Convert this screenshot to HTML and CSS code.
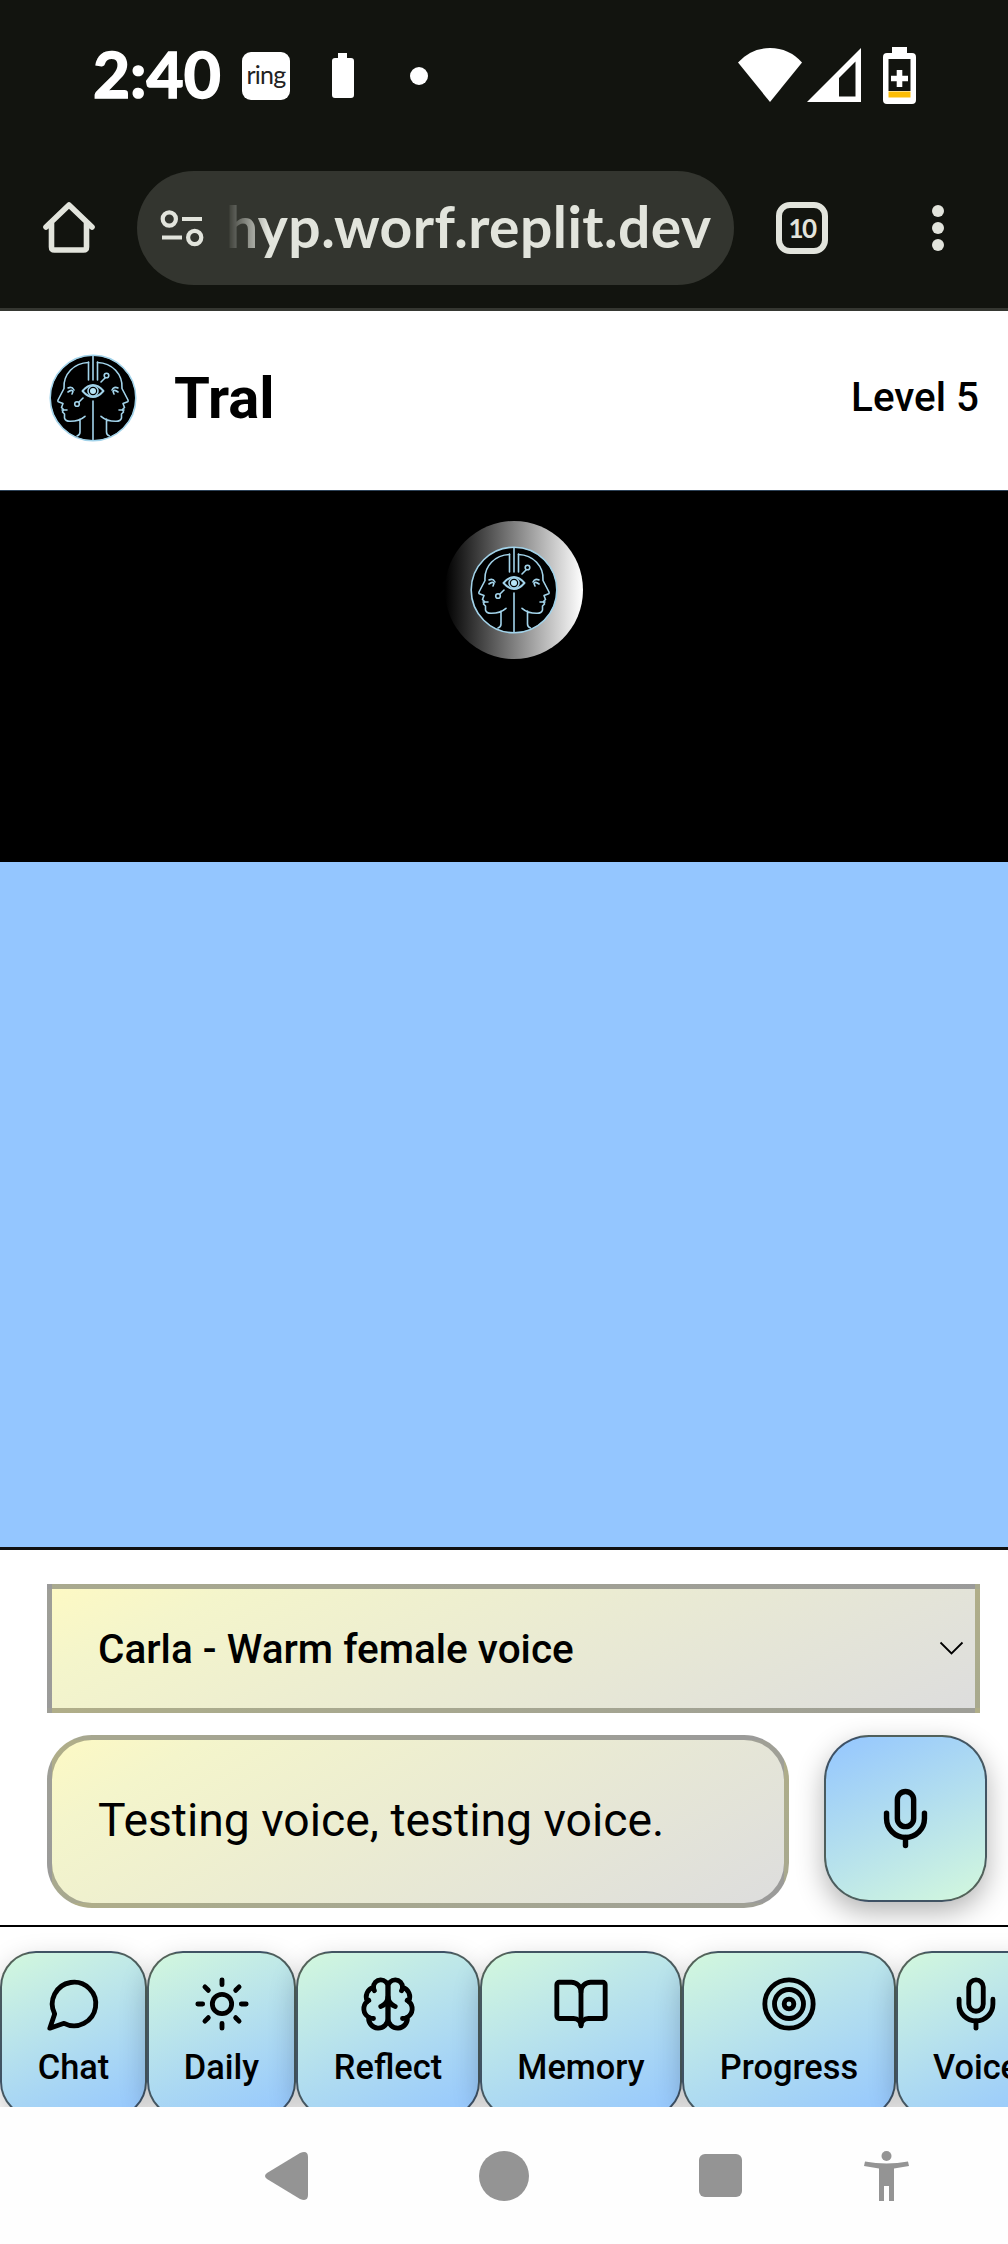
FILE: index.html
```html
<!DOCTYPE html>
<html lang="en">
<head>
<meta charset="utf-8">
<title>Tral</title>
<link rel="stylesheet" href="styles.css">
</head>
<body>
<svg class="defs" width="0" height="0" aria-hidden="true">
  <symbol id="logo" viewBox="0 0 88 88">
    <circle cx="44" cy="44" r="42.6" fill="#000"/>
    <g fill="none" stroke="#a2d3ea" stroke-width="1.6" stroke-linecap="round" stroke-linejoin="round">
      <circle cx="44" cy="44" r="42.8"/>
      <path d="M44 2V26M39.500 8V26M48.500 8V26M44 47V86"/>
      <path d="M39.500 8.500C25 9 14 20 15 34.500L9 46q-.5 2 1 2l4 1.500-1.500 4 2 2-1 2.500 2 2v4q1 3.500 6 3.300c6 0 11-2 14.500-5M31 65V78q0 3-3 4"/>
      <path d="M48.500 8.500C63 9 74 20 73 34.500L79 46q.5 2-1 2l-4 1.500 1.500 4-2 2 1 2.500-2 2v4q-1 3.500-6 3.300c-6 0-11-2-14.500-5M57.500 65V78q0 3 3 4"/>
      <path d="M19 34q4-2 6 2M19 38q4-3 5-.5l-1 2.500M69 34q-4-2-6 2M69 38q-4-3-5-.5l1 2.500M13 56h5M75 56h-5"/>
      <path d="M33.500 37Q44 25 54.500 37Q44 49 33.500 37Z" stroke-width="1.900"/>
      <circle cx="44" cy="37" r="5"/>
      <circle cx="28" cy="50" r="2.300"/><path d="M30 48l4-4"/>
      <circle cx="57.500" cy="21.500" r="2.300"/><path d="M56 24l-4 4"/>
    </g>
    <circle cx="44" cy="37" r="3" fill="#b8e6f8"/>
  </symbol>
  <symbol id="mic" viewBox="0 0 24 24">
    <path d="M12 2a3 3 0 0 0-3 3v7a3 3 0 0 0 6 0V5a3 3 0 0 0-3-3Z"/><path d="M19 10v2a7 7 0 0 1-14 0v-2"/><path d="M12 19v3"/>
  </symbol>
</svg>

<div class="phone">
  <div class="status">
    <span class="time">2:40</span>
    <span class="ring">ring</span>
    <svg class="batt-note" width="24" height="46" viewBox="0 0 24 46" fill="#fff"><path d="M7 0h9v5h4q3 0 3 3v34q0 3-3 3H4q-3 0-3-3V8q0-3 3-3h3z"/></svg>
    <i class="dot"></i>
    <svg class="wifi" width="64" height="54" viewBox="0 0 64 54" fill="#fff"><path d="M0 14.500Q13 0 32 0t32 14.500L32 54z"/></svg>
    <svg class="signal" width="54" height="54" viewBox="0 0 54 54" fill="#fff"><path fill-rule="evenodd" d="M54 0V54H0zM48.500 13.500L32 30V48.500H48.500z"/></svg>
    <svg class="battery" width="33" height="57" viewBox="0 0 33 57"><path fill="#fff" d="M9 0h15v6h5q4 0 4 4v43q0 4-4 4H4q-4 0-4-4V10q0-4 4-4h5z"/><path fill="#12140f" d="M5.500 12h22v32h-22z"/><path fill="#fbbc04" d="M5.500 44.500h22v6h-22z"/><path stroke="#fff" stroke-width="5.600" d="M8 31.500h17M16.500 23v17"/></svg>
  </div>

  <div class="toolbar">
    <svg class="home" width="54" height="54" viewBox="0 0 54 54" fill="none" stroke="#e2e4dc" stroke-width="5.600" stroke-linejoin="round" stroke-linecap="round"><path d="M4 26L27 4l23 22M9.500 22V46q0 3 3 3h29q3 0 3-3V22"/></svg>
    <div class="omnibox">
      <svg class="tune" width="44" height="38" viewBox="0 0 44 38" fill="none" stroke="#e2e4dc" stroke-width="4.200"><circle cx="9.300" cy="10" r="6.600"/><path d="M22 10h20M2 28.500h20"/><circle cx="34.700" cy="28.500" r="6.600"/></svg>
      <span class="url">hyp.worf.replit.dev</span>
    </div>
    <span class="tabs">10</span>
    <span class="more"><i></i><i></i><i></i></span>
  </div>

  <header class="app-header">
    <svg class="logo"><use href="#logo"/></svg>
    <h1>Tral</h1>
    <span class="level">Level 5</span>
  </header>

  <section class="stage">
    <div class="orb"><svg class="logo"><use href="#logo"/></svg></div>
  </section>
  <main class="messages"></main>

  <section class="composer">
    <div class="voice-select">
      <span>Carla - Warm female voice</span>
      <svg width="25" height="15" viewBox="0 0 25 15" fill="none" stroke="#000" stroke-width="1.800"><path d="M1.500 1.500L12.500 12.500L23.500 1.500"/></svg>
    </div>
    <div class="row">
      <div class="message-input">Testing voice, testing voice.</div>
      <button class="mic-button"><svg class="icon" width="65" height="65"><use href="#mic"/></svg></button>
    </div>
  </section>

  <nav class="nav">
    <div class="tab chat"><svg class="icon" viewBox="0 0 24 24"><path d="M7.900 20A9 9 0 1 0 4 16.100L2 22Z"/></svg><span>Chat</span></div>
    <div class="tab daily"><svg class="icon" viewBox="0 0 24 24"><circle cx="12" cy="12" r="4"/><path d="M12 2v2M12 20v2M4.930 4.930l1.410 1.410M17.660 17.660l1.410 1.410M2 12h2M20 12h2M6.340 17.660l-1.410 1.410M19.070 4.930l-1.410 1.410"/></svg><span>Daily</span></div>
    <div class="tab reflect"><svg class="icon" viewBox="0 0 24 24"><path d="M12 5a3 3 0 1 0-5.997.125 4 4 0 0 0-2.526 5.770 4 4 0 0 0 .556 6.588A4 4 0 1 0 12 18Z"/><path d="M12 5a3 3 0 1 1 5.997.125 4 4 0 0 1 2.526 5.770 4 4 0 0 1-.556 6.588A4 4 0 1 1 12 18Z"/><path d="M15 13a4.500 4.500 0 0 1-3-4 4.500 4.500 0 0 1-3 4"/><path d="M17.599 6.500a3 3 0 0 0 .399-1.375M6.003 5.125A3 3 0 0 0 6.401 6.500M3.477 10.896a4 4 0 0 1 .585-.396M19.938 10.500a4 4 0 0 1 .585.396M6 18a4 4 0 0 1-1.967-.516M19.967 17.484A4 4 0 0 1 18 18"/></svg><span>Reflect</span></div>
    <div class="tab memory"><svg class="icon" viewBox="0 0 24 24"><path d="M12 7v14"/><path d="M3 18a1 1 0 0 1-1-1V4a1 1 0 0 1 1-1h5a4 4 0 0 1 4 4 4 4 0 0 1 4-4h5a1 1 0 0 1 1 1v13a1 1 0 0 1-1 1h-6a3 3 0 0 0-3 3 3 3 0 0 0-3-3z"/></svg><span>Memory</span></div>
    <div class="tab progress"><svg class="icon" viewBox="0 0 24 24"><circle cx="12" cy="12" r="10"/><circle cx="12" cy="12" r="6"/><circle cx="12" cy="12" r="2"/></svg><span>Progress</span></div>
    <div class="tab voice"><svg class="icon"><use href="#mic"/></svg><span>Voice</span></div>
  </nav>

  <div class="system-nav">
    <svg class="back" width="43" height="48" viewBox="0 0 43 48"><path fill="#949494" d="M2 21L35 1q8-3 8 4v38q0 7-8 4L2 27q-4-3 0-6z"/></svg>
    <i class="circle"></i>
    <i class="square"></i>
    <svg class="person" width="45" height="50" viewBox="0 0 45 50" fill="#949494"><circle cx="22.500" cy="5" r="5"/><path d="M1 10.500q21.500 4 43 0l1 4.500-15 2.500V50h-5V35h-5v15h-5V17.500L0 15z"/></svg>
  </div>
</div>
</body>
</html>
```
FILE: styles.css
```css
* { box-sizing: border-box; }
body { margin: 0; background: #fff; color: #000; font-family: Roboto, sans-serif; }
.defs { position: absolute; }
svg { display: block; flex: none; }
i { display: block; flex: none; }
.phone { width: 1008px; height: 2244px; display: flex; flex-direction: column; overflow: hidden; }

.status { height: 152px; flex: none; background: #12140f; display: flex; align-items: center; padding-left: 93px; color: #fff; }
.time { width: 149px; font: 700 64px/80px Lato, sans-serif; -webkit-text-stroke: 1.6px #fff; white-space: nowrap; margin-top: -5px; }
.ring { width: 48px; height: 48px; border-radius: 9px; background: #fff; color: #222; font: 400 25px/44px Lato, sans-serif; letter-spacing: -.8px; text-align: center; }
.batt-note { margin-left: 41px; }
.dot { width: 18px; height: 18px; border-radius: 50%; background: #fff; margin-left: 55px; }
.wifi { margin-left: 310px; margin-top: -2px; }
.signal { margin-left: 5px; margin-top: -2px; }
.battery { margin-left: 22px; margin-top: -2px; }

.toolbar { height: 159px; flex: none; background: #12140f; border-bottom: 3px solid #353731; display: flex; align-items: center; padding: 0 0 0 42px; color: #e2e4dc; }
.omnibox { margin-left: 41px; width: 597px; height: 114px; margin-top: -4px; border-radius: 57px; background: #33352f; display: flex; align-items: center; padding-left: 23px; }
.home, .tabs, .more { margin-top: -4px; }
.url { margin-left: 22px; font: 700 57px/80px Lato, sans-serif; white-space: nowrap; letter-spacing: .45px; margin-top: -5px; -webkit-mask-image: linear-gradient(90deg, transparent, #000 42px); mask-image: linear-gradient(90deg, transparent, #000 42px); }
.tabs { margin-left: 42px; width: 52px; height: 52px; border: 6px solid #e2e4dc; border-radius: 14px; font: 700 26px/40px Lato, sans-serif; letter-spacing: -1.5px; text-align: center; }
.more { margin-left: 104px; display: flex; flex-direction: column; gap: 5px; }
.more i { width: 12px; height: 12px; border-radius: 50%; background: #e2e4dc; }

.app-header { height: 180px; flex: none; border-bottom: 1px solid #2d4258; display: flex; align-items: center; padding: 0 29px 6px 49px; }
.logo { width: 88px; height: 88px; }
.app-header h1 { margin: 0 auto 0 37px; font-size: 58px; line-height: 72px; font-weight: 700; }
.level { font-size: 40.4px; font-weight: 500; }

.stage { height: 371px; flex: none; background: #000; padding-top: 30px; display: flex; justify-content: center; align-items: flex-start; padding-left: 19px; }
.orb { width: 138px; height: 138px; border-radius: 50%; background: linear-gradient(90deg, #000, #fff); display: grid; place-items: center; }
.messages { flex: 1; background: #94c6ff; }

.composer { height: 378px; flex: none; border-top: 3px solid #111; padding: 34px 21px 0 47px; }
.voice-select { width: 933px; height: 129px; border: 5px solid rgba(0,0,0,.3); background: linear-gradient(155deg, #fdf9c4, #f4f5cb 15%, #ddd); display: flex; align-items: center; justify-content: space-between; padding: 0 11px 0 46px; font-size: 40.5px; font-weight: 500; }
.row { display: flex; gap: 35px; margin-top: 22px; }
.message-input { width: 742px; height: 173px; border: 5px solid rgba(0,0,0,.3); border-radius: 45px; background: linear-gradient(150deg, #fdf9c4, #f4f5cb 15%, #ddd); padding-left: 46px; font-size: 46.3px; line-height: 161px; white-space: nowrap; }
.mic-button { width: 163px; height: 167px; border: 2px solid rgba(0,0,0,.6); border-radius: 45px; background: linear-gradient(155deg, #94c6ff, #d3f8dd); box-shadow: 0 10px 28px rgba(0,0,0,.3); display: grid; place-items: center; padding: 0; color: #000; }
.icon { fill: none; stroke: #000; stroke-width: 2; stroke-linecap: round; stroke-linejoin: round; }

.nav { height: 182px; flex: none; border-top: 2px solid #000; padding-top: 24px; display: flex; overflow: hidden; position: relative; background: #fff; }
.tab { height: 167px; flex: none; border: 2px solid rgba(0,0,0,.6); border-radius: 36px; background: linear-gradient(155deg, #d3f8dd, #94c6ff); box-shadow: 0 10px 28px rgba(0,0,0,.22); display: flex; flex-direction: column; align-items: center; padding-top: 22px; font-size: 34.4px; font-weight: 500; line-height: 44px; }
.tab .icon { width: 58px; height: 58px; margin-bottom: 12px; }
.chat { width: 147px; }
.daily { width: 149px; }
.reflect { width: 184px; }
.memory { width: 202px; }
.progress { width: 214px; }
.voice { width: 160px; }

.system-nav { height: 137px; flex: none; background: #fefefe; display: flex; align-items: center; padding-left: 265px; }
.circle { width: 50px; height: 50px; border-radius: 50%; background: #949494; margin-left: 171px; }
.square { width: 43px; height: 43px; border-radius: 6px; background: #949494; margin-left: 170px; }
.person { margin-left: 122px; }
```
